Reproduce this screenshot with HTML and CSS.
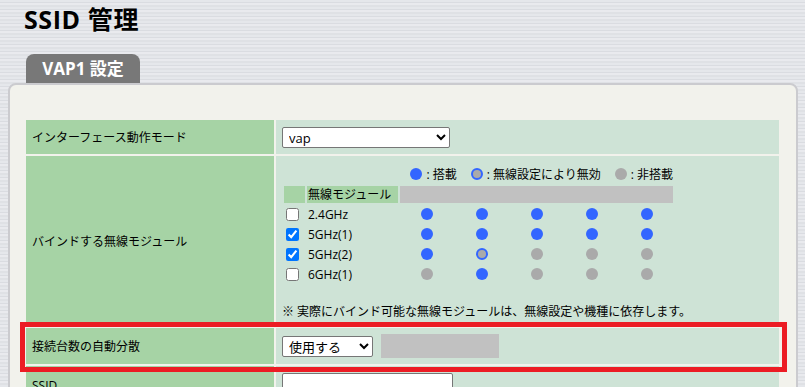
FILE: index.html
```html
<!DOCTYPE html>
<html>
<head>
    <meta charset="utf-8">
    <title>SSID 管理</title>
    <link rel="stylesheet" href="styles.css">
</head>
<body>
    <h1 class="page-title">SSID 管理</h1>
    <div class="tab">VAP1 設定</div>
    <div class="panel">
        <div class="settings">
            <div class="row row-mode">
                <div class="label">インターフェース動作モード</div>
                <div class="value">
                    <select class="select-mode"><option>vap</option></select>
                </div>
            </div>

            <div class="row row-bind">
                <div class="label">バインドする無線モジュール</div>
                <div class="value value-bind">
                    <div class="legend">
                        <span class="legend-item"><span class="dot"></span>: 搭載</span>
                        <span class="legend-item"><span class="dot dot-off"></span>: 無線設定により無効</span>
                        <span class="legend-item"><span class="dot dot-none"></span>: 非搭載</span>
                    </div>
                    <div class="modules">
                        <div class="head-check"></div>
                        <div class="head-name">無線モジュール</div>
                        <div class="head-slots"></div>

                        <div class="check"><input type="checkbox"></div>
                        <div class="name">2.4GHz</div>
                        <div class="slot"><span class="dot"></span></div>
                        <div class="slot"><span class="dot"></span></div>
                        <div class="slot"><span class="dot"></span></div>
                        <div class="slot"><span class="dot"></span></div>
                        <div class="slot"><span class="dot"></span></div>

                        <div class="check"><input type="checkbox" checked></div>
                        <div class="name">5GHz(1)</div>
                        <div class="slot"><span class="dot"></span></div>
                        <div class="slot"><span class="dot"></span></div>
                        <div class="slot"><span class="dot"></span></div>
                        <div class="slot"><span class="dot"></span></div>
                        <div class="slot"><span class="dot"></span></div>

                        <div class="check"><input type="checkbox" checked></div>
                        <div class="name">5GHz(2)</div>
                        <div class="slot"><span class="dot"></span></div>
                        <div class="slot"><span class="dot dot-off"></span></div>
                        <div class="slot"><span class="dot dot-none"></span></div>
                        <div class="slot"><span class="dot dot-none"></span></div>
                        <div class="slot"><span class="dot dot-none"></span></div>

                        <div class="check"><input type="checkbox"></div>
                        <div class="name">6GHz(1)</div>
                        <div class="slot"><span class="dot dot-none"></span></div>
                        <div class="slot"><span class="dot"></span></div>
                        <div class="slot"><span class="dot dot-none"></span></div>
                        <div class="slot"><span class="dot dot-none"></span></div>
                        <div class="slot"><span class="dot dot-none"></span></div>
                    </div>
                    <p class="note">※ 実際にバインド可能な無線モジュールは、無線設定や機種に依存します。</p>
                </div>
            </div>

            <div class="row row-balance highlight">
                <div class="label">接続台数の自動分散</div>
                <div class="value">
                    <select class="select-balance"><option>使用する</option></select>
                    <span class="status-box"></span>
                </div>
            </div>

            <div class="row row-ssid">
                <div class="label">SSID</div>
                <div class="value">
                    <input type="text" class="input-ssid">
                </div>
            </div>
        </div>
    </div>
</body>
</html>
```

FILE: styles.css
```css
body {
    margin: 0;
    padding: 0;
    font-family: "Open Sans", "Noto Sans CJK JP", sans-serif;
    font-size: 12px;
    color: #000;
    background-color: #e3e5e9;
    background-image: repeating-linear-gradient(180deg,
        #e5e7eb 0, #e5e7eb 2px,
        #dadce1 2px, #dadce1 3px,
        #e9eaee 3px, #e9eaee 5px,
        #dfe1e5 5px, #dfe1e5 7px);
    overflow: hidden;
}

.page-title {
    margin: 0;
    padding: 4px 24px 0;
    font-size: 25px;
    line-height: 30px;
    font-weight: bold;
    letter-spacing: 0.6px;
}

.tab {
    margin: 20px 0 0 26px;
    width: 114px;
    height: 29px;
    line-height: 29px;
    background: #787878;
    color: #fff;
    font-size: 17px;
    font-weight: bold;
    text-align: center;
    border-radius: 8px 8px 0 0;
}

.panel {
    margin: 0 7px 0 8px;
    padding: 35px 17px 20px 16px;
    background: #f2f2ec;
    border: 2px solid #cbcbcf;
    border-radius: 8px;
}

.settings {
    display: flex;
    flex-direction: column;
    gap: 2px;
}

.row {
    display: grid;
    grid-template-columns: 248px 1fr;
    gap: 2px;
}

.row-mode { height: 34px; }
.row-bind { height: 170px; }
.row-balance { height: 36px; }
.row-ssid { height: 38px; }

.label {
    display: flex;
    align-items: center;
    padding-left: 6px;
    background: #a6d3a5;
}

.value {
    display: flex;
    align-items: center;
    padding-left: 6px;
    background: #cee3d6;
}

select, .input-ssid {
    font-family: "Open Sans", "Noto Sans CJK JP", sans-serif;
    font-size: 13px;
    height: 21px;
    padding: 0 2px;
    background: #fff;
    border: 1px solid #767676;
    border-radius: 2px;
    box-sizing: border-box;
    margin: 0;
}

.select-mode { width: 168px; }
.select-balance { width: 91px; }

.status-box {
    display: inline-block;
    width: 118px;
    height: 24px;
    margin-left: 8px;
    background: #c1c1c1;
}

.input-ssid {
    width: 171px;
    height: 23px;
    align-self: flex-start;
    margin-top: 7px;
}

/* binding table */
.value-bind {
    display: block;
    padding: 9px 6px 0;
}

.legend {
    width: 391px;
    height: 18px;
    display: flex;
    justify-content: flex-end;
    align-items: center;
}

.legend-item {
    display: flex;
    align-items: center;
    margin-left: 14px;
}

.legend-item .dot {
    margin-right: 4px;
}

.dot {
    display: inline-block;
    width: 12px;
    height: 12px;
    border-radius: 50%;
    background: #3366ff;
    box-sizing: border-box;
}

.dot-off {
    background: #aaaaaa;
    border: 2px solid #3366ff;
}

.dot-none {
    background: #aaaaaa;
}

.modules {
    display: grid;
    grid-template-columns: 21px 91px repeat(5, 53px);
    grid-auto-rows: 18px;
    grid-template-rows: 17px;
    gap: 2px;
    margin: 3px 0 0 2px;
}

.head-check, .head-name {
    background: #a6d3a5;
}

.head-name {
    padding-left: 1px;
    line-height: 17px;
}

.head-slots {
    grid-column: 3 / span 5;
    background: #c1c1c1;
}

.check, .name, .slot {
    display: flex;
    align-items: center;
}

.check input {
    margin: 0 0 0 2px;
    width: 13px;
    height: 13px;
}

.name {
    padding-left: 1px;
}

.slot {
    justify-content: center;
}

.note {
    margin: 20px 0 0;
    line-height: 18px;
}

/* red annotation frame */
.highlight {
    position: relative;
}

.highlight::after {
    content: "";
    position: absolute;
    top: -6px;
    left: -6px;
    right: -8px;
    bottom: -8px;
    border: 5px solid #ec1c24;
    pointer-events: none;
}
```
